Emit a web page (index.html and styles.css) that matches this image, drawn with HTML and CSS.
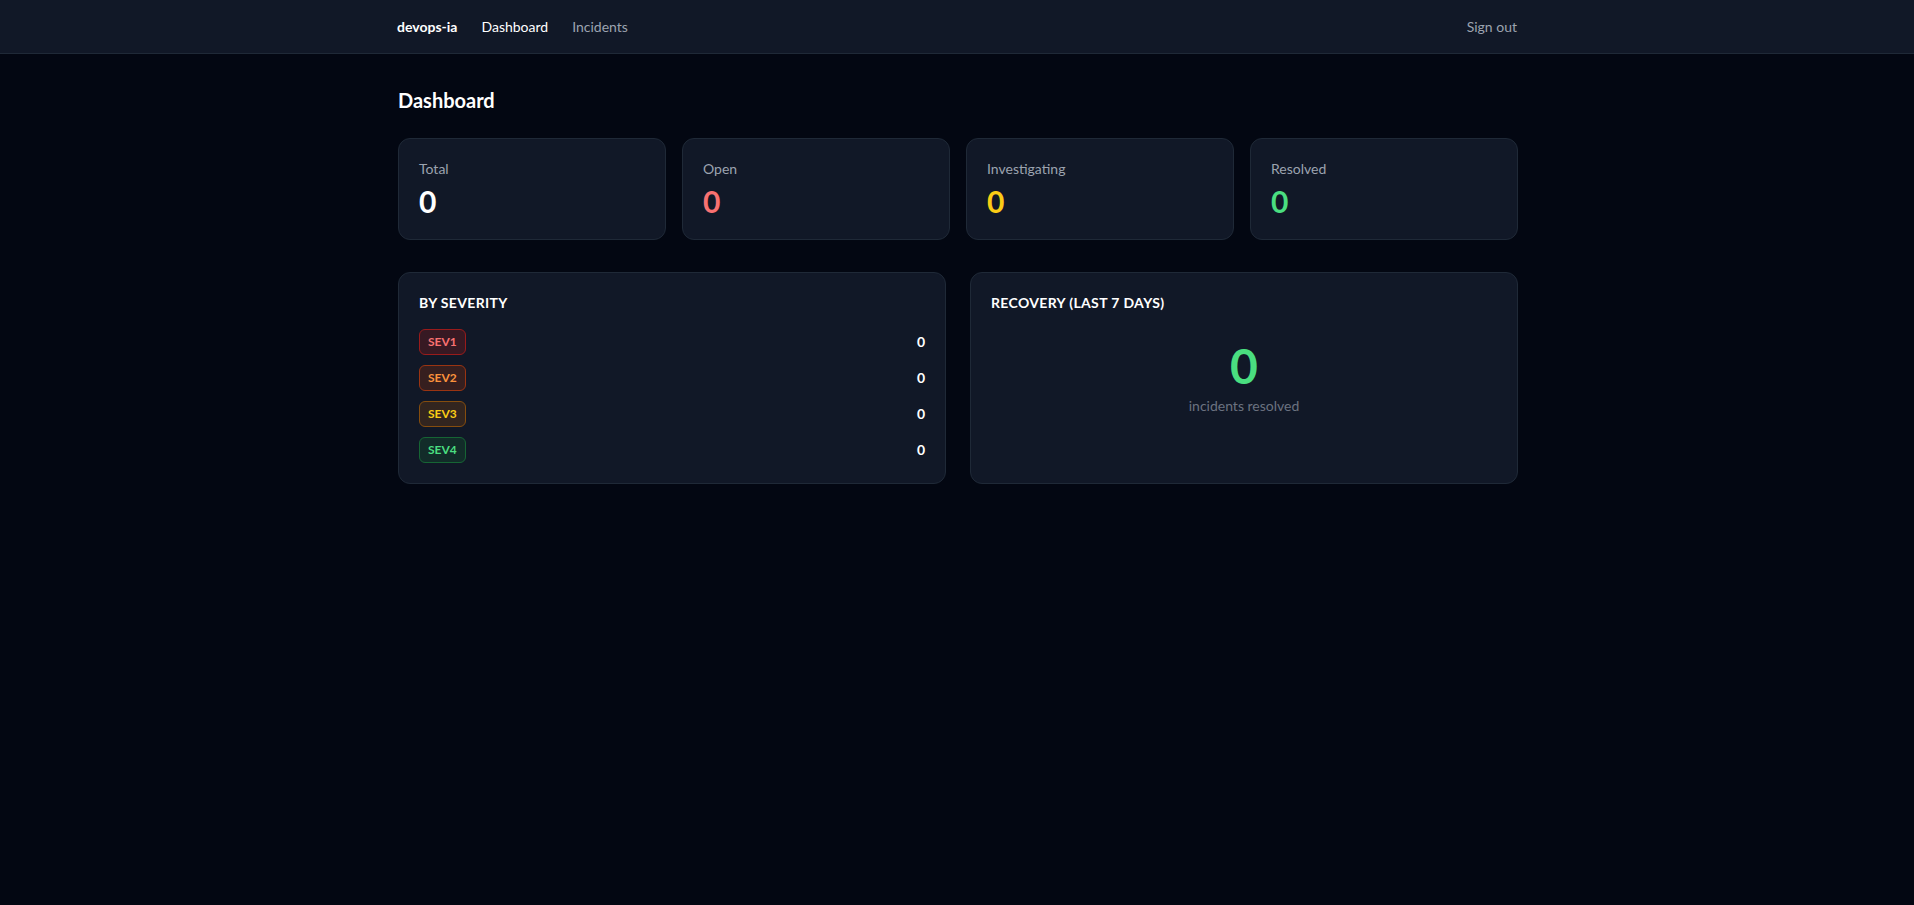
FILE: index.html
```html
<!DOCTYPE html>
<html lang="en">

<head>
    <meta charset="UTF-8">
    <meta name="viewport" content="width=device-width, initial-scale=1.0">
    <title>devops-ia - Dashboard</title>
    <link rel="stylesheet" href="styles.css">
</head>

<body>
    <nav class="topbar">
        <div class="topbar-inner">
            <div class="nav-left">
                <a class="brand" href="#">devops-ia</a>
                <a class="nav-link active" href="#">Dashboard</a>
                <a class="nav-link" href="#">Incidents</a>
            </div>
            <a class="nav-link" href="#">Sign out</a>
        </div>
    </nav>

    <main class="page">
        <h1 class="page-title">Dashboard</h1>

        <div class="stats">
            <div class="card stat">
                <p class="stat-label">Total</p>
                <p class="stat-value">0</p>
            </div>
            <div class="card stat">
                <p class="stat-label">Open</p>
                <p class="stat-value red">0</p>
            </div>
            <div class="card stat">
                <p class="stat-label">Investigating</p>
                <p class="stat-value yellow">0</p>
            </div>
            <div class="card stat">
                <p class="stat-label">Resolved</p>
                <p class="stat-value green">0</p>
            </div>
        </div>

        <div class="panels">
            <div class="card panel">
                <h2 class="panel-title">By severity</h2>
                <div class="sev-list">
                    <div class="sev-row">
                        <span class="badge sev1">SEV1</span>
                        <span class="sev-count">0</span>
                    </div>
                    <div class="sev-row">
                        <span class="badge sev2">SEV2</span>
                        <span class="sev-count">0</span>
                    </div>
                    <div class="sev-row">
                        <span class="badge sev3">SEV3</span>
                        <span class="sev-count">0</span>
                    </div>
                    <div class="sev-row">
                        <span class="badge sev4">SEV4</span>
                        <span class="sev-count">0</span>
                    </div>
                </div>
            </div>

            <div class="card panel">
                <h2 class="panel-title">Recovery (last 7 days)</h2>
                <div class="recovery">
                    <p class="recovery-value">0</p>
                    <p class="recovery-label">incidents resolved</p>
                </div>
            </div>
        </div>
    </main>
</body>

</html>
```

FILE: styles.css
```css
* {
    box-sizing: border-box;
}

body {
    font-family: Lato, "Noto Sans", sans-serif;
    margin: 0;
    padding: 0;
    min-height: 100vh;
    background-color: #030712;
    color: #f3f4f6;
}

a {
    text-decoration: none;
}

p,
h1,
h2 {
    margin: 0;
}

.topbar {
    background-color: #111827;
    border-bottom: 1px solid #1f2937;
}

.topbar-inner {
    max-width: 1152px;
    margin: 0 auto;
    padding: 16px 16px;
    display: flex;
    justify-content: space-between;
    align-items: center;
    font-size: 14px;
    line-height: 20px;
    min-height: 53px;
}

.nav-left {
    display: flex;
    align-items: center;
    gap: 24px;
}

.brand {
    color: #fff;
    font-weight: 700;
}

.nav-link {
    color: #9ca3af;
}

.nav-link.active {
    color: #fff;
}

.page {
    max-width: 1152px;
    margin: 0 auto;
    padding: 32px 15px 32px 17px;
}

.page-title {
    font-size: 20px;
    line-height: 28px;
    font-weight: 700;
    color: #fff;
    margin-bottom: 24px;
}

.card {
    background-color: #111827;
    border: 1px solid #1f2937;
    border-radius: 12px;
    padding: 20px;
}

.stats {
    display: grid;
    grid-template-columns: repeat(4, 1fr);
    gap: 16px;
    margin-bottom: 32px;
}

.stat-label {
    font-size: 14px;
    line-height: 20px;
    color: #9ca3af;
}

.stat-value {
    margin-top: 4px;
    font-size: 30px;
    line-height: 36px;
    font-weight: 700;
    color: #fff;
}

.red {
    color: #f87171;
}

.yellow {
    color: #facc15;
}

.green {
    color: #4ade80;
}

.panels {
    display: grid;
    grid-template-columns: 1fr 1fr;
    gap: 24px;
}

.panel-title {
    font-size: 14px;
    line-height: 20px;
    font-weight: 700;
    text-transform: uppercase;
    letter-spacing: 0.025em;
    color: #fff;
    margin-bottom: 16px;
}

.sev-list {
    display: flex;
    flex-direction: column;
    gap: 10px;
}

.sev-row {
    display: flex;
    justify-content: space-between;
    align-items: center;
}

.badge {
    font-size: 12px;
    line-height: 16px;
    font-weight: 700;
    padding: 4px 8px;
    border: 1px solid;
    border-radius: 6px;
}

.sev1 {
    color: #f87171;
    background-color: rgba(127, 29, 29, 0.35);
    border-color: #991b1b;
}

.sev2 {
    color: #fb923c;
    background-color: rgba(124, 45, 18, 0.35);
    border-color: #9a3412;
}

.sev3 {
    color: #facc15;
    background-color: rgba(113, 63, 18, 0.35);
    border-color: #854d0e;
}

.sev4 {
    color: #4ade80;
    background-color: rgba(20, 83, 45, 0.35);
    border-color: #166534;
}

.sev-count {
    font-size: 14px;
    line-height: 20px;
    font-weight: 700;
    color: #fff;
}

.recovery {
    padding-top: 13px;
    text-align: center;
}

.recovery-value {
    font-size: 48px;
    line-height: 48px;
    font-weight: 700;
    color: #4ade80;
}

.recovery-label {
    margin-top: 6px;
    font-size: 14px;
    line-height: 20px;
    color: #6b7280;
}
```
